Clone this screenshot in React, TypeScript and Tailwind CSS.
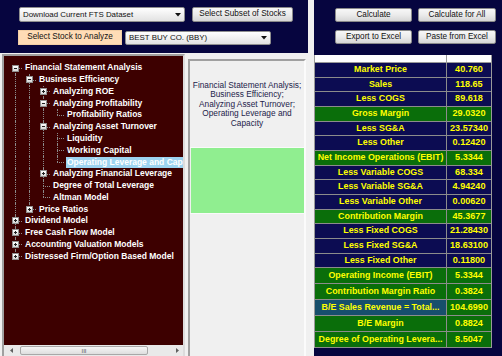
import React from "react";

type Row = { t: string; l: number; k?: boolean; e?: boolean; s?: boolean };

const rows: Row[] = [
  { t: "Financial Statement Analysis", l: 0, k: true, e: true },
  { t: "Business Efficiency", l: 1, k: true, e: true },
  { t: "Analyzing ROE", l: 2, k: true, e: false },
  { t: "Analyzing Profitability", l: 2, k: true, e: true },
  { t: "Profitability Ratios", l: 3 },
  { t: "Analyzing Asset Turnover", l: 2, k: true, e: true },
  { t: "Liquidity", l: 3 },
  { t: "Working Capital", l: 3 },
  { t: "Operating Leverage and Capacity", l: 3, s: true },
  { t: "Analyzing Financial Leverage", l: 2, k: true, e: false },
  { t: "Degree of Total Leverage", l: 2 },
  { t: "Altman Model", l: 2 },
  { t: "Price Ratios", l: 1, k: true, e: false },
  { t: "Dividend Model", l: 0, k: true },
  { t: "Free Cash Flow Model", l: 0, k: true },
  { t: "Accounting Valuation Models", l: 0, k: true },
  { t: "Distressed Firm/Option Based Model", l: 0, k: true },
];

function cont(i: number, l: number) {
  for (let j = i + 1; j < rows.length; j++) {
    if (rows[j].l < l) return false;
    if (rows[j].l === l) return true;
  }
  return false;
}

const line = "absolute left-[7px] border-l border-dotted border-[#8a8a8a]";

function TreeRow({ r, i }: { r: Row; i: number }) {
  const cells = [];
  for (let l = 0; l <= r.l; l++) {
    if (l < r.l) {
      cells.push(
        <div key={l} className="relative w-[14px] shrink-0">
          {cont(i, l) && <div className={line + " top-0 bottom-0"} />}
        </div>
      );
    } else {
      const next = cont(i, l);
      cells.push(
        <div key={l} className="relative w-[14px] shrink-0">
          {i > 0 && <div className={line + " top-0 h-1/2"} />}
          {next && <div className={line + " top-1/2 bottom-0"} />}
          <div className="absolute left-[7px] right-0 top-1/2 border-t border-dotted border-[#8a8a8a]" />
          {r.k && (
            <div className="absolute left-[4px] top-[2.5px] w-[7px] h-[7px] bg-linear-to-b from-[#ffffff] to-[#d8d8d8] border border-[#8f8f8f] flex items-center justify-center">
              <div className="relative w-[3px] h-[3px] flex items-center justify-center">
                <div className="w-[3px] h-[1px] bg-[#222]" />
                {!r.e && <div className="absolute left-[1px] top-0 w-[1px] h-[3px] bg-[#222]" />}
              </div>
            </div>
          )}
        </div>
      );
    }
  }
  return (
    <div className="flex h-[11.77px] items-stretch whitespace-nowrap">
      {cells}
      <div className="ml-[2px] flex items-center">
        <span className={"px-[1px] leading-[11px] " + (r.s ? "bg-[#9dd3f0]" : "")}>{r.t}</span>
      </div>
    </div>
  );
}

function Arrow() {
  return (
    <svg width="6" height="4" viewBox="0 0 6 4" className="shrink-0">
      <polygon points="0,0 6,0 3,3.5" fill="#111" />
    </svg>
  );
}

function Btn({ children, className = "" }: { children: React.ReactNode; className?: string }) {
  return (
    <div
      className={
        "flex items-center justify-center rounded-[2px] border border-[#8a8a8a] bg-linear-to-b from-[#f7f7f7] via-[#ebebeb] to-[#d6d6d6] text-[8.2px] text-[#111] whitespace-nowrap " +
        className
      }
    >
      {children}
    </div>
  );
}

function Drop({ text, className = "" }: { text: string; className?: string }) {
  return (
    <div
      className={
        "flex items-center justify-between pl-[3px] pr-[3px] rounded-[2px] border border-[#8f8f8f] bg-linear-to-b from-[#ffffff] to-[#e2e2e2] text-[7.9px] text-[#111] whitespace-nowrap " +
        className
      }
    >
      <span>{text}</span>
      <Arrow />
    </div>
  );
}

type TR = { a: string; v: string; c: "n" | "g" | "b" };
const table: TR[] = [
  { a: "Market Price", v: "40.760", c: "n" },
  { a: "Sales", v: "118.65", c: "n" },
  { a: "Less COGS", v: "89.618", c: "n" },
  { a: "Gross Margin", v: "29.0320", c: "g" },
  { a: "Less SG&A", v: "23.57340", c: "n" },
  { a: "Less Other", v: "0.12420", c: "n" },
  { a: "Net Income Operations (EBIT)", v: "5.3344", c: "g" },
  { a: "Less Variable COGS", v: "68.334", c: "n" },
  { a: "Less Variable SG&A", v: "4.94240", c: "n" },
  { a: "Less Variable Other", v: "0.00620", c: "n" },
  { a: "Contribution Margin", v: "45.3677", c: "g" },
  { a: "Less Fixed COGS", v: "21.28430", c: "n" },
  { a: "Less Fixed SG&A", v: "18.63100", c: "n" },
  { a: "Less Fixed Other", v: "0.11800", c: "n" },
  { a: "Operating Income (EBIT)", v: "5.3344", c: "g" },
  { a: "Contribution Margin Ratio", v: "0.3824", c: "g" },
  { a: "B/E Sales Revenue = Total...", v: "104.6990", c: "b" },
  { a: "B/E Margin", v: "0.8824", c: "g" },
  { a: "Degree of Operating Levera...", v: "8.5047", c: "g" },
];

export default function App() {
  return (
    <div className="w-[502px] h-[356px] flex bg-[#f0f0f0] overflow-hidden font-['Liberation_Sans',Arial,sans-serif]">
      {/* left section */}
      <div className="w-[308px] flex flex-col">
        <div className="h-[53px] bg-[#06053f] pl-[19px] pt-[7px] flex flex-col gap-[8px]">
          <div className="flex items-center gap-[7px]">
            <Drop text="Download Current FTS Dataset" className="w-[166px] h-[15px]" />
            <Btn className="w-[101px] h-[15px]">Select Subset of Stocks</Btn>
          </div>
          <div className="flex items-center gap-[3px] -ml-[1px]">
            <div className="w-[104px] h-[15px] flex items-center justify-center bg-[#ffdcb6] border border-[#f3cfa5] text-[8.2px] text-[#111] whitespace-nowrap">
              Select Stock to Analyze
            </div>
            <Drop text="BEST BUY CO. (BBY)" className="w-[146px] h-[14px]" />
          </div>
        </div>
        <div className="flex-1 flex pt-[1px] pl-[2px] min-h-0">
          {/* tree */}
          <div className="w-[183px] flex flex-col border-l-2 border-t-2 border-r-2 border-l-[#a0a0a0] border-t-[#a0a0a0] border-r-[#dcdcdc]">
            <div className="flex-1 bg-[#3d0000] pl-[4px] pt-[6px] overflow-hidden text-white font-bold text-[8.5px]">
              {rows.map((r, i) => (
                <TreeRow key={i} r={r} i={i} />
              ))}
            </div>
            <div className="h-[11px] bg-[#e9e9e9] flex items-center">
              <div className="w-[14px] h-full flex items-center justify-center">
                <svg width="3" height="5" viewBox="0 0 3 5"><polygon points="3,0 3,5 0,2.5" fill="#606060" /></svg>
              </div>
              <div className="ml-[2px] w-[128px] h-[9px] rounded-[2px] border border-[#a8a8a8] bg-linear-to-b from-[#f6f6f6] to-[#dedede] flex items-center justify-center text-[6px] text-[#555] leading-none">
                III
              </div>
              <div className="flex-1 h-full flex items-center justify-end pr-[4px]">
                <svg width="3" height="5" viewBox="0 0 3 5"><polygon points="0,0 0,5 3,2.5" fill="#606060" /></svg>
              </div>
            </div>
          </div>
          {/* middle */}
          <div className="ml-[3px] mt-[5px] w-[118px] flex flex-col border-l-2 border-t-2 border-r-2 border-l-[#a0a0a0] border-t-[#a0a0a0] border-r-[#fbfbfb]">
            <div className="h-[86px] pt-[20px] text-center text-[8.3px] leading-[9.4px] text-[#23234a]">
              Financial Statement Analysis;
              <br />
              Business Efficiency;
              <br />
              Analyzing Asset Turnover;
              <br />
              Operating Leverage and
              <br />
              Capacity
            </div>
            <div className="h-[1px] bg-[#fafafa]" />
            <div className="h-[65px] ml-[1px] bg-[#90ee90]" />
            <div className="h-[1px] bg-[#fafafa]" />
          </div>
        </div>
      </div>
      {/* right section */}
      <div className="ml-[6px] flex-1 bg-[#06053f] flex flex-col">
        <div className="pt-[8px] pl-[21px] grid grid-cols-[77px_78px] gap-x-[6px] gap-y-[8px]">
          <Btn className="h-[14px]">Calculate</Btn>
          <Btn className="h-[14px]">Calculate for All</Btn>
          <Btn className="h-[14px]">Export to Excel</Btn>
          <Btn className="h-[14px]">Paste from Excel</Btn>
        </div>
        <div className="mt-[11px] w-[178px] border-l border-r border-[#9a9a9a] text-[#ffff00] font-bold">
          <div className="h-[8px] flex bg-white border-b border-[#9a9a9a]">
            <div className="w-[132px] border-r border-[#9a9a9a]" />
            <div className="flex-1" />
          </div>
          {table.map((r, i) => (
            <div
              key={i}
              className={"flex border-b border-[#8c8c8c] " + (i < 14 ? "h-[14.67px]" : "h-[16px]")}
            >
              <div
                className={
                  "w-[132px] border-r border-[#8c8c8c] flex items-center justify-center text-[8.9px] whitespace-nowrap overflow-hidden " +
                  (r.c === "n" ? "bg-[#0c0c52]" : r.c === "g" ? "bg-[#0a6e0a]" : "bg-[#174f6c]")
                }
              >
                {r.a}
              </div>
              <div
                className={
                  "flex-1 flex items-center justify-center text-[9.1px] whitespace-nowrap overflow-hidden " +
                  (r.c === "n" ? "bg-[#0c0c52]" : "bg-[#0a6e0a]")
                }
              >
                {r.v}
              </div>
            </div>
          ))}
        </div>
      </div>
    </div>
  );
}
